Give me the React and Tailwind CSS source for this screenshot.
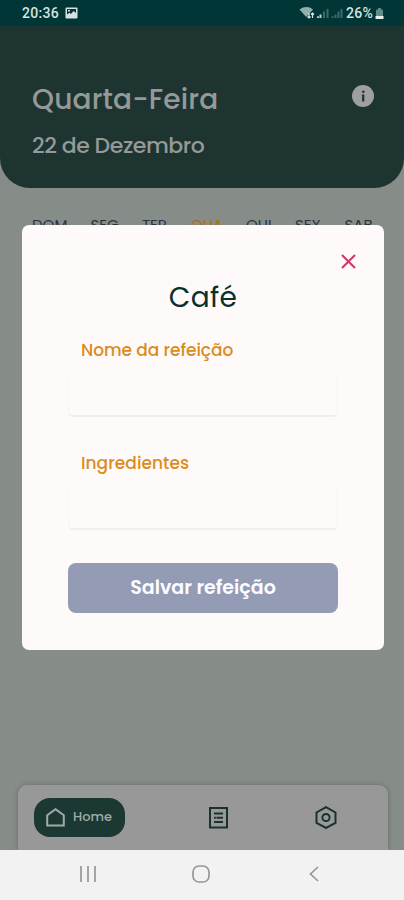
import React from "react";

const weekDays = [
  { label: "DOM", width: "w-[58.500px]" },
  { label: "SEG", width: "w-[51.500px]" },
  { label: "TER", width: "w-[49px]" },
  { label: "QUA", width: "w-[55px]", active: true },
  { label: "QUI", width: "w-[49px]" },
  { label: "SEX", width: "w-[49.500px]" },
  { label: "SAB", width: "w-[30px]" },
];

const StatusBar = () => {
  return (
    <div className="h-[26px] shrink-0 bg-[#003635] pl-[22px] pr-[20px] flex items-center justify-between text-[#d5e2e1] font-['Roboto',sans-serif] font-medium text-[14px]">
      <div className="flex items-center gap-[6px]">
        <span className="tracking-[0.300px]">20:36</span>
        <svg width="13" height="12" viewBox="0 0 13 12">
          <path fillRule="evenodd" d="M1.500 0.500h10q1 0 1 1v9q0 1-1 1h-10q-1 0-1-1v-9q0-1 1-1zM2 2v5.500l2.500-1.700L6 7l2.500-3L11 6V2z" fill="currentColor" />
          <circle cx="4" cy="3.700" r="1" fill="currentColor" />
        </svg>
      </div>
      <div className="flex items-center">
        <svg className="mr-[2px]" width="45" height="14" viewBox="0 0 45 14">
          <path d="M0.500 3.500C5 0.200 10 0.200 14 3.500L7.200 11z" fill="#8fb0ad" />
          <path d="M10 7v5M8.500 10.500 10 12l1.500-1.500M13.500 12V7M12 8.500 13.500 7 15 8.500" fill="none" stroke="#dce8e7" strokeWidth="1.200" />
          <path d="M18 12v-1.800h2V12zM20.500 12V8.500h2V12z" fill="#b9cecc" />
          <path d="M24 12V5.500h2V12zM27.500 12V3h2V12zM32.500 12v-1.800h2V12zM35.500 12V8.500h2V12zM38.500 12V5.500h2V12zM41.500 12V3h2V12z" fill="#396c68" />
        </svg>
        <span className="tracking-[0.300px]">26%</span>
        <svg className="ml-[2px]" width="9" height="13" viewBox="0 0 9 13">
          <path d="M3 1h3v1.500h1q1 0 1 1V9H1V3.500q0-1 1-1h1z" fill="#628c88" />
          <path d="M0.500 9h8v3h-8z" fill="#e4efee" />
        </svg>
      </div>
    </div>
  );
};

const Header = () => {
  return (
    <header className="h-[162px] shrink-0 rounded-b-[30px] bg-[#1d3431] pl-[32px] pr-[30px] pt-[54px] flex justify-between text-[#959998]">
      <div className="whitespace-nowrap">
        <h1 className="text-[28px] leading-[40px] font-medium tracking-[0.150px]">Quarta-Feira</h1>
        <h2 className="mt-[10px] text-[22px] leading-[32px] font-medium tracking-[-0.450px]">22 de Dezembro</h2>
      </div>
      <svg className="mt-[5px]" width="22" height="22" viewBox="0 0 22 22">
        <circle cx="11" cy="11" r="11" fill="#a09f9f" />
        <circle cx="11.300" cy="6.700" r="1.300" fill="#1d3431" />
        <path d="M9.800 9.500h2.500v7h-2.200v-5.700h-.3z" fill="#1d3431" />
      </svg>
    </header>
  );
};

const WeekRow = () => {
  return (
    <div className="pl-[32px] pt-[27px] flex whitespace-nowrap text-[15px] leading-[20px]">
      {weekDays.map((day) => (
        <span key={day.label} className={`${day.width} ${day.active ? "text-[#b06c0c]" : "text-[#2c3340]"}`}>
          {day.label}
        </span>
      ))}
    </div>
  );
};

const MealModal = () => {
  return (
    <div className="absolute left-[22px] top-[225px] w-[362px] h-[425px] rounded-[7px] bg-[#fefaf9] px-[46px] flex flex-col">
      <button className="self-end mt-[29px] -mr-[18px] text-[#cf3a68]">
        <svg width="15" height="15" viewBox="0 0 15 15" fill="none" stroke="currentColor" strokeWidth="2.100">
          <path d="M1 1l13 13M14 1L1 14" />
        </svg>
      </button>
      <h3 className="mt-[9px] text-center text-[28px] leading-[40px] tracking-[0.300px] text-[#08302d]">Café</h3>
      <label className="mt-[20px] pl-[13px] text-[17px] leading-[24px] font-medium text-[#dc8c1d]">
        <span className="tracking-[-0.070px]">Nome da refeição</span>
      </label>
      <div className="mt-[12px] h-[43px] rounded-b-[5px] border-x border-b-2 border-x-[#f8f4f4] border-b-[#f2eeee]" />
      <label className="mt-[34px] pl-[13px] text-[17px] leading-[24px] font-medium text-[#dc8c1d]">
        <span className="tracking-[0.050px]">Ingredientes</span>
      </label>
      <div className="mt-[12px] h-[43px] rounded-b-[5px] border-x border-b-2 border-x-[#f8f4f4] border-b-[#f2eeee]" />
      <button className="mt-[33px] h-[50px] w-[270px] rounded-[8px] bg-[#949bb5] text-[19px] font-semibold text-[#fdfcff]">
        <span>Salvar refeição</span>
      </button>
    </div>
  );
};

const TabBar = () => {
  return (
    <nav className="mt-auto ml-[18px] w-[370px] h-[65px] shrink-0 rounded-t-[9px] bg-[#989898] shadow-[0_0_5px_rgba(0,0,0,0.25)] pl-[16px] pt-[13px] flex items-start text-[#18322f]">
      <div className="w-[91px] h-[39px] rounded-[16px] bg-[#1b3833] pl-[12px] flex items-center gap-[8px] text-[#9eabaa]">
        <svg width="19" height="19" viewBox="0 0 19 19" fill="none" stroke="currentColor" strokeWidth="2">
          <path d="M1.200 7.200 9.500 1.200l8.300 6V17.500H1.200z" />
        </svg>
        <span className="text-[13px] font-medium pb-[1px]">Home</span>
      </div>
      <svg className="ml-[84px] mt-[9px]" width="19" height="22" viewBox="0 0 19 22" fill="none" stroke="currentColor" strokeWidth="2">
        <path d="M1 1h17v19.500H1zM5 6.500h1.800M6.500 6.500H14M5 10.700h1.800M7.500 10.700H14M5 15h1.800M6.500 15H14" />
      </svg>
      <svg className="ml-[87px] mt-[8px]" width="22" height="23" viewBox="0 0 22 23" fill="none" stroke="currentColor" strokeWidth="2">
        <path d="M11 1.200 20.500 6.500v10.500L11 22 1.500 17V6.500z" />
        <circle cx="11" cy="11.500" r="3.600" />
      </svg>
    </nav>
  );
};

const SystemNav = () => {
  return (
    <div className="h-[50px] shrink-0 bg-[#f2f2f2] pl-[80px] pb-[2px] flex items-center text-[#979797]">
      <svg width="16" height="16" viewBox="0 0 16 16" fill="none" stroke="currentColor" strokeWidth="1.700">
        <path d="M1 0v16M8 0v16M15 0v16" />
      </svg>
      <svg className="ml-[96px]" width="18" height="18" viewBox="0 0 18 18" fill="none" stroke="currentColor" strokeWidth="1.700">
        <rect x="1" y="1" width="16" height="16" rx="6" />
      </svg>
      <svg className="ml-[99px]" width="10" height="16" viewBox="0 0 10 16" fill="none" stroke="currentColor" strokeWidth="1.700">
        <path d="M9 1 1.500 8 9 15" />
      </svg>
    </div>
  );
};

const App = () => {
  return (
    <div className="relative w-[404px] h-[900px] overflow-hidden bg-[#868d88] flex flex-col font-['Poppins','Inter',sans-serif]">
      <StatusBar />
      <Header />
      <WeekRow />
      <TabBar />
      <SystemNav />
      <MealModal />
    </div>
  );
};

export default App;
